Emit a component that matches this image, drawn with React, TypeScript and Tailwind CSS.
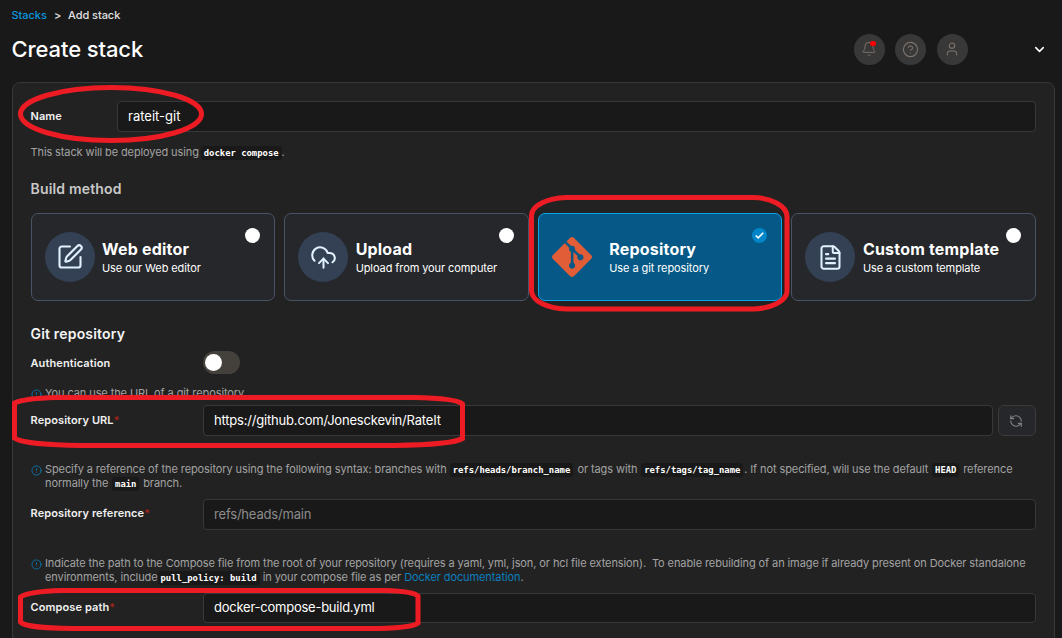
import type { ReactNode } from "react";
import { Bell, ChevronDown, CircleAlert, CircleHelp, CloudUpload, FileText, RefreshCcw, SquarePen, User } from "lucide-react";
import { SiGit } from "react-icons/si";

function Code({ children, className = "mx-[0.8px]" }: { children: ReactNode; className?: string }) {
  return (
    <code className={`rounded-[3px] bg-[#191919] px-[3px] pt-[2px] pb-[2px] font-['DejaVu_Sans_Mono',monospace] text-[8.9px] leading-[10px] font-bold tracking-normal text-white ${className}`}>
      {children}
    </code>
  );
}

function Field({ children, className }: { children?: ReactNode; className: string }) {
  return (
    <div className={`flex items-center rounded-[4px] border border-[#383838] bg-[#191919] px-[10px] text-[13px] ${className}`}>
      {children}
    </div>
  );
}

function Label({ children, required, className }: { children: ReactNode; required?: boolean; className: string }) {
  return (
    <div className={`shrink-0 text-[11px] font-semibold tracking-[0.1px] text-[#f0f0f0] ${className}`}>
      {children}
      {required && <span className="font-normal text-[#b42318]">*</span>}
    </div>
  );
}

function Tip({ children, className }: { children: ReactNode; className: string }) {
  return (
    <div className={`flex text-[11px] leading-[14px] tracking-[-0.095px] text-[#a3a3a3] ${className}`}>
      <CircleAlert size={11} strokeWidth={2} className="mt-[2.500px] mr-[3.500px] shrink-0 text-[#0b74ad]" />
      <div className="whitespace-nowrap">{children}</div>
    </div>
  );
}

function RoundButton({ children }: { children: ReactNode }) {
  return <button className="relative flex h-[31px] w-[31px] items-center justify-center rounded-full bg-[#383838] text-[#7c726b]">{children}</button>;
}

function MethodCard({ icon, title, text, selected }: { icon: ReactNode; title: string; text: string; selected?: boolean }) {
  return (
    <div
      className={`relative flex h-[88px] items-center rounded-[7px] border pl-[13px] text-white ${
        selected ? "border-[#0ba5ec] bg-[#065986]" : "border-[#475467] bg-[#26272b]"
      }`}
    >
      {selected ? (
        <div className="flex h-[50px] w-[57.500px] items-center">{icon}</div>
      ) : (
        <div className="mr-[7.500px] flex h-[50px] w-[50px] items-center justify-center rounded-full bg-[#344054] text-[#e0f2fe]">{icon}</div>
      )}
      <div className="pt-[2px] whitespace-nowrap">
        <div className="text-[16px] leading-[21px] font-bold tracking-[0.2px]">{title}</div>
        <div className="text-[11px] leading-[17px] tracking-[-0.09px]">{text}</div>
      </div>
      <span
        className={`absolute top-[14px] right-[14px] flex h-[15px] w-[15px] items-center justify-center rounded-full ${
          selected ? "bg-[#0086c9]" : "bg-white"
        }`}
      >
        {selected && (
          <svg width="9" height="7" viewBox="0 0 9 7" fill="none" stroke="white" strokeWidth="1.6">
            <path d="M.7 3.5 3.2 5.8 8.3.8" />
          </svg>
        )}
      </span>
    </div>
  );
}

function Annotations() {
  return (
    <svg className="pointer-events-none absolute inset-0" width="1062" height="638" fill="none" stroke="#ed1c24" strokeWidth="5">
      <ellipse cx="111" cy="114" rx="90.5" ry="26.5" />
      <path d="M566 197.500H753C771 197.500 786.500 206 787 216V292C786 301 771 308.500 754 309H566C547 308.500 532 301 531.500 291V215C532 206 547 198 566 197.500Z" />
      <path d="M56 397.500H414C443 398 458 400 462.500 404V438.500C455 443 427 445 394 445.500H82C53 445 23 444 14.500 438V403C23 399 37 398 56 397.500Z" />
      <path d="M62 590.500H385C405 591 415 593 418 596V623C413 627 395 628.500 368 628.500H72C43 628 25 627 20.500 622V597C26 593 42 591 62 590.500Z" />
    </svg>
  );
}

export default function App() {
  return (
    <div className="relative h-[638px] w-[1062px] overflow-hidden bg-[#191919] pl-3 font-['Inter',sans-serif]">
      <header className="h-[82px]">
        <nav className="flex h-[31px] items-center text-[11px] font-medium tracking-[-0.05px] text-[#e0e0e0]">
          <span className="-ml-[0.5px] w-[42.500px] text-[#0b96df]">Stacks</span>
          <span className="w-[14px]">&gt;</span>
          <span>Add stack</span>
        </nav>
        <div className="flex h-[36px] items-center">
          <h1 className="-ml-[0.5px] flex-1 text-[22px] font-medium tracking-[-0.1px] text-white">Create stack</h1>
          <div className="mr-[64px] flex gap-[10.500px]">
            <RoundButton>
              <Bell size={16} strokeWidth={1.5} />
              <span className="absolute top-[7px] left-[16px] h-[5px] w-[6px] rounded-full bg-[#ff0000]" />
            </RoundButton>
            <RoundButton><CircleHelp size={17} strokeWidth={1.6} /></RoundButton>
            <RoundButton><User size={16} strokeWidth={1.6} /></RoundButton>
          </div>
          <ChevronDown size={15} strokeWidth={2.5} className="mr-[15.500px] text-white" />
        </div>
      </header>

      <main className="h-[570px] w-[1043px] rounded-[8px] border border-[#383838] bg-[#222222] pt-[18px] pr-[18px] pl-[17.500px]">
        <div className="flex h-[31px] items-center">
          <Label className="w-[86.500px]">Name</Label>
          <Field className="h-[31px] flex-1 text-white">rateit-git</Field>
        </div>
        <p className="mt-[12px] h-[16px] text-[11px] leading-[16px] tracking-[-0.11px] text-[#a3a3a3]">
          This stack will be deployed using <Code className="-ml-[1px]">docker compose</Code>.
        </p>
        <h2 className="mt-[19px] h-[20px] text-[14px] leading-[20px] font-semibold tracking-[0.18px] text-[#c8c8c8]">Build method</h2>
        <div className="mt-[14px] grid grid-cols-4 gap-[9px]">
          <MethodCard icon={<SquarePen size={28} strokeWidth={1.8} />} title="Web editor" text="Use our Web editor" />
          <MethodCard icon={<CloudUpload size={27} strokeWidth={1.8} />} title="Upload" text="Upload from your computer" />
          <MethodCard selected icon={<SiGit size={40} color="#e05d38" />} title="Repository" text="Use a git repository" />
          <MethodCard icon={<FileText size={27} strokeWidth={1.8} />} title="Custom template" text="Use a custom template" />
        </div>
        <h2 className="mt-[23px] h-[20px] text-[14px] leading-[20px] font-semibold tracking-[0.18px] text-[#f4f4f4]">Git repository</h2>
        <div className="mt-[7px] flex h-[23px] items-center">
          <Label className="w-[172.500px] pt-[1px]">Authentication</Label>
          <div className="flex h-[23px] w-[37px] items-center rounded-full bg-[#44403c] pl-[2px]">
            <span className="h-[17px] w-[17px] rounded-full bg-white" />
          </div>
        </div>
        <Tip className="mt-[12px] h-[14px]">You can use the URL of a git repository.</Tip>
        <div className="mt-[5px] flex h-[31px] items-center">
          <Label required className="w-[172.500px]">Repository URL</Label>
          <Field className="h-[31px] flex-1 tracking-[-0.19px] text-white">https://github.com/Jonesckevin/RateIt</Field>
          <button className="ml-[5px] flex h-[31px] w-[38px] items-center justify-center rounded-[6px] border border-[#3d3a38] bg-[#26272b] pr-[2px] text-[#808080]">
            <RefreshCcw size={14} strokeWidth={2} />
          </button>
        </div>
        <Tip className="mt-[26px] h-[28px]">
          Specify a reference of the repository using the following syntax: branches with <Code className="mr-[1.200px]">refs/heads/branch_name</Code> or tags with <Code>refs/tags/tag_name</Code>. If not specified, will use the default <Code>HEAD</Code> reference
          <br />
          normally the <Code>main</Code> branch.
        </Tip>
        <div className="mt-[9px] flex h-[31px] items-center">
          <Label required className="w-[172.500px] pb-[3px]">Repository reference</Label>
          <Field className="h-[31px] flex-1 tracking-[-0.19px] text-[#8c8c8c]">refs/heads/main</Field>
        </div>
        <Tip className="mt-[26px] h-[28px]">
          Indicate the path to the Compose file from the root of your repository (requires a yaml, yml, json, or hcl file extension).&nbsp; To enable rebuilding of an image if already present on Docker standalone
          <br />
          environments, include <Code className="-ml-[3px]">pull_policy: build</Code> in your compose file as per <span className="text-[#0b7fbf]">Docker documentation</span>.
        </Tip>
        <div className="mt-[9px] flex h-[30px] items-center">
          <Label required className="w-[172.500px] pb-[2px]">Compose path</Label>
          <Field className="h-[30px] flex-1 tracking-[-0.24px] text-white">docker-compose-build.yml</Field>
        </div>
      </main>
      <Annotations />
    </div>
  );
}
